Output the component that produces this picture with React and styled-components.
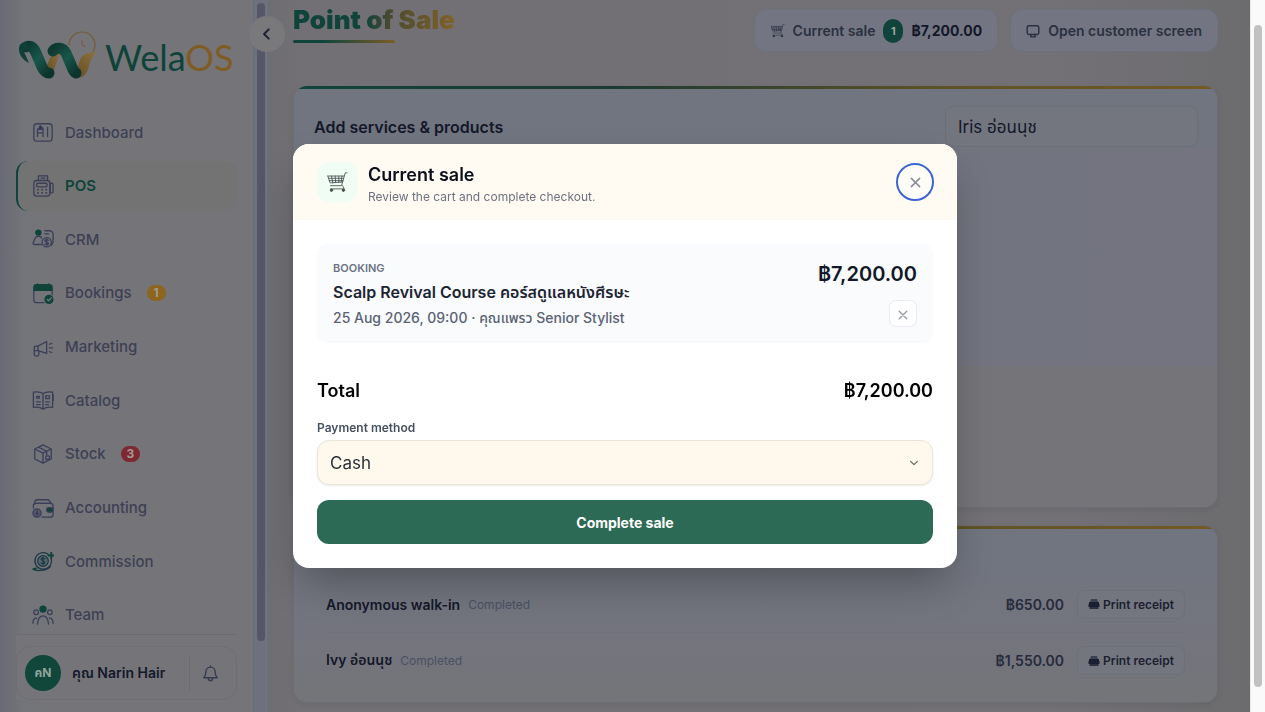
import React, { useState } from 'react';
import styled, { createGlobalStyle } from 'styled-components';

const GlobalStyle = createGlobalStyle`
    * {
        box-sizing: border-box;
    }

    body {
        margin: 0;
        overflow: hidden;
        font-family: Inter, "Noto Sans Thai", "Noto Sans", sans-serif;
        color: #14182a;
        background: #706f72;
    }

    button, select {
        font-family: inherit;
        margin: 0;
    }

    h1, h2, p {
        margin: 0;
    }
`;

const Page = styled.div`
    display: flex;
    height: 100vh;
    overflow: hidden;
`;

/* ---------- sidebar ---------- */

const Sidebar = styled.aside`
    position: relative;
    display: flex;
    flex-direction: column;
    flex: none;
    width: 254px;
    padding: 30px 16px 12px;
    border-right: 1px solid #686b78;
    background: linear-gradient(90deg, #696a74 0, #737479 22px, #757579 60px);
`;

const Brand = styled.a`
    display: flex;
    align-items: center;
    gap: 9px;
    height: 52px;
    margin-bottom: 25px;
    padding-left: 2px;
    text-decoration: none;
    font-family: Lato, sans-serif;
    font-size: 36px;
    line-height: 60px;
    color: #0f4339;

    span {
        padding-top: 1px;
    }
`;

const BrandAccent = styled.span`
    color: #805c25;
`;

const Nav = styled.nav`
    display: flex;
    flex: 1;
    flex-direction: column;
    justify-content: space-between;
    margin-bottom: -6px;
`;

const NavItem = styled.a`
    display: flex;
    align-items: center;
    flex: none;
    gap: 11px;
    height: 50px;
    padding-left: ${(p) => (p.$active ? '14px' : '16px')};
    border-left: ${(p) => (p.$active ? '2px solid #10443a' : '0')};
    border-radius: 12px;
    background: ${(p) => (p.$active ? '#737373' : 'transparent')};
    color: ${(p) => (p.$active ? '#10443a' : '#3d4055')};
    font-size: 15px;
    font-weight: ${(p) => (p.$active ? 600 : 500)};
    text-decoration: none;

    svg {
        flex: none;
        color: #3a3e59;
    }
`;

const Count = styled.span`
    min-width: 19px;
    height: 16px;
    margin-left: 4px;
    border-radius: 8px;
    background: ${(p) => p.$color};
    color: #a09c98;
    font-size: 12px;
    font-weight: 700;
    line-height: 16px;
    text-align: center;
`;

const SidebarFooter = styled.div`
    position: relative;
    padding-top: 11px;
    border-top: 1px solid #6b6b71;
    background: #757579;
`;

const Profile = styled.div`
    display: flex;
    align-items: center;
    height: 54px;
    padding: 0 0 0 8px;
    border: 1px solid #6f6f73;
    border-radius: 14px;
`;

const Avatar = styled.span`
    flex: none;
    width: 36px;
    height: 36px;
    border-radius: 50%;
    background: #10473a;
    color: #92a39e;
    font-size: 12px;
    font-weight: 700;
    line-height: 36px;
    text-align: center;
`;

const ProfileName = styled.span`
    flex: 1;
    margin-left: 11px;
    font-size: 14px;
    font-weight: 600;
    white-space: nowrap;
`;

const BellButton = styled.button`
    display: flex;
    align-items: center;
    justify-content: center;
    width: 47px;
    height: 36px;
    padding: 0 6px 0 0;
    border: 0;
    border-left: 1px solid #6c6c71;
    background: none;
    color: #363a50;
`;

const SideScroll = styled.div`
    position: relative;
    flex: none;
    width: 13px;
    padding: 3px 1px 0 3px;
    background: #6d707d;
    border-right: 1px solid #747580;
`;

const SideThumb = styled.div`
    height: 638px;
    border-radius: 4px;
    background: #535767;
`;

const CollapseButton = styled.button`
    position: absolute;
    top: 16px;
    left: -5px;
    display: flex;
    align-items: center;
    justify-content: center;
    width: 36px;
    height: 36px;
    padding: 0;
    border: 0;
    border-radius: 50%;
    background: #79797c;
    color: #1d2233;
`;

/* ---------- main ---------- */

const Main = styled.main`
    flex: 1;
    min-width: 0;
    padding: 5px 32px 0 26px;
    background: linear-gradient(90deg, #6e6d73 0, #727074 30px, #737175 80%, #6c6b6e 100%);
`;

const Header = styled.header`
    display: flex;
    align-items: flex-start;
    justify-content: space-between;
    height: 81px;
`;

const PageTitle = styled.h1`
    font-size: 26px;
    font-weight: 900;
    line-height: 30px;
    background: linear-gradient(90deg, #10443a 45%, #4a4a30 60%, #826127 100%);
    background-clip: text;
    color: transparent;
`;

const TitleRule = styled.div`
    width: 102px;
    height: 3px;
    margin-top: 5px;
    border-radius: 2px;
    background: linear-gradient(90deg, #10443a 30%, #7b5d28 100%);
`;

const HeaderActions = styled.div`
    display: flex;
    gap: 12px;
    padding-top: 4px;
`;

const HeaderButton = styled.button`
    display: flex;
    align-items: center;
    gap: 8px;
    height: 43px;
    padding: 0 15px;
    border: 1px solid #6c7180;
    border-radius: 12px;
    background: #737682;
    color: #2b3040;
    font-size: 14px;
    font-weight: 600;
    white-space: nowrap;

    b {
        font-weight: 700;
        color: #131729;
    }
`;

const CartCount = styled.span`
    width: 20px;
    height: 24px;
    border-radius: 10px;
    background: #10443a;
    color: #9aa6a4;
    font-size: 11px;
    font-weight: 700;
    line-height: 24px;
`;

const Card = styled.section`
    position: relative;
    margin-bottom: 18px;
    overflow: hidden;
    border: 1px solid #6d6e75;
    border-top: 0;
    border-radius: 14px;
    background: linear-gradient(180deg, #70757f, #73747e 60%, #747578);
    box-shadow: 0 2px 6px rgba(0, 0, 0, 0.08);

    &::before {
        content: '';
        display: block;
        height: 3px;
        background: linear-gradient(90deg, #10443a, #1d3a32 35%, #5d5226 70%, #745923);
    }
`;

const CatalogHead = styled.div`
    display: flex;
    align-items: center;
    justify-content: space-between;
    padding: 17px 19px 0 20px;
`;

const CardTitle = styled.h2`
    font-size: 16px;
    font-weight: 600;
`;

const BranchSelect = styled.select`
    width: 253px;
    height: 41px;
    padding: 0 12px;
    appearance: none;
    border: 1px solid #6c6f77;
    border-radius: 8px;
    background: #73767f;
    color: #14182a;
    font-size: 17px;
`;

const CatalogPanel = styled.div`
    height: 219px;
    background: linear-gradient(90deg, #71747f, #73747f);
`;

const CatalogRest = styled.div`
    height: 141px;
    background: #757579;
`;

const SalesCard = styled(Card)`
    padding-bottom: 14px;
    margin-bottom: 0;
`;

const Sales = styled.ul`
    margin: 47px 32px 0;
    padding: 0;
    list-style: none;
`;

const Sale = styled.li`
    display: flex;
    align-items: center;
    height: 56px;
    font-size: 14px;

    & + & {
        border-top: 1px solid #707279;
    }
`;

const Customer = styled.span`
    font-weight: 600;
`;

const SaleStatus = styled.span`
    flex: 1;
    margin-left: 8px;
    color: #4a5063;
    font-size: 12px;
`;

const SaleAmount = styled.span`
    margin-right: 13px;
    color: #262b3d;
    font-size: 14px;
    font-weight: 600;
`;

const PrintButton = styled.button`
    display: flex;
    align-items: center;
    gap: 3px;
    height: 29px;
    padding: 0 10px;
    border: 1px solid #6c7079;
    border-radius: 7px;
    background: #74767f;
    color: #1a1f31;
    font-size: 12px;
    font-weight: 600;
`;

const PageScroll = styled.div`
    flex: none;
    width: 15px;
    padding: 25px 3px 0;
    border-left: 1px solid #e8e8e8;
    background: #fafafa;
`;

const PageThumb = styled.div`
    height: 662px;
    border-radius: 4px;
    background: #c1c1c1;
`;

/* ---------- checkout dialog ---------- */

const Overlay = styled.div`
    position: fixed;
    inset: 0 15px 0 0;
    display: flex;
    align-items: center;
    justify-content: center;
`;

const Dialog = styled.div`
    width: 664px;
    overflow: hidden;
    border-radius: 16px;
    background: #fff;
    color: #0b0f19;
    box-shadow: 0 20px 44px -10px rgba(0, 0, 0, 0.32);
`;

const DialogHead = styled.div`
    display: flex;
    align-items: center;
    height: 76px;
    padding: 0 23px 0 24px;
    border-bottom: 1px solid #fdf9f0;
    background: #fffbf2;
`;

const CartTile = styled.span`
    display: flex;
    align-items: center;
    justify-content: center;
    width: 40px;
    height: 40px;
    margin-right: 11px;
    border-radius: 12px;
    background: #effdf5;
    color: #444b4b;
`;

const DialogHeading = styled.div`
    flex: 1;
    padding-top: 6px;
`;

const DialogTitle = styled.h2`
    font-size: 18px;
    font-weight: 600;
    line-height: 24px;
`;

const DialogHint = styled.p`
    color: #6d7280;
    font-size: 12px;
    line-height: 20px;
`;

const CloseButton = styled.button`
    display: flex;
    align-items: center;
    justify-content: center;
    width: 38px;
    height: 38px;
    padding: 2px 0 0;
    border: 2px solid #3d64d4;
    border-radius: 50%;
    background: #fffdf8;
    color: #868b96;
`;

const DialogBody = styled.form`
    display: flex;
    flex-direction: column;
    padding: 24px;
`;

const CartLine = styled.div`
    display: flex;
    justify-content: space-between;
    height: 99px;
    padding: 16px;
    border-radius: 10px;
    background: #f9fbfd;
`;

const LineKind = styled.p`
    color: #6d7382;
    font-size: 11px;
    font-weight: 600;
    line-height: 16px;
`;

const LineTitle = styled.p`
    margin-top: 4px;
    color: #1d2433;
    font-size: 16px;
    font-weight: 600;
    line-height: 25px;
`;

const LineMeta = styled.p`
    color: #5a6274;
    font-size: 14px;
    font-weight: 500;
    line-height: 25px;
`;

const LineSide = styled.div`
    display: flex;
    flex-direction: column;
    align-items: flex-end;
    gap: 11px;
`;

const LinePrice = styled.span`
    color: #111827;
    font-size: 20px;
    font-weight: 600;
    line-height: 29px;
`;

const RemoveButton = styled.button`
    display: flex;
    align-items: center;
    justify-content: center;
    width: 28px;
    height: 28px;
    padding: 2px 0 0;
    border: 1px solid #e9ebf0;
    border-radius: 7px;
    background: #fff;
    color: #9599a3;
`;

const TotalRow = styled.div`
    display: flex;
    justify-content: space-between;
    margin-top: 35px;
    color: #000;
    font-size: 18px;
    font-weight: 600;
    line-height: 26px;
`;

const FieldLabel = styled.label`
    margin-top: 15px;
    color: #465063;
    font-size: 12px;
    font-weight: 600;
    line-height: 18px;
`;

const SelectWrap = styled.div`
    display: grid;
    align-items: center;
    margin-top: 3px;

    select, svg {
        grid-area: 1 / 1;
    }

    svg {
        justify-self: end;
        margin-right: 14px;
        color: #666;
        pointer-events: none;
    }
`;

const PaymentSelect = styled.select`
    width: 100%;
    height: 45px;
    padding: 0 12px;
    appearance: none;
    border: 1px solid #e9e5da;
    border-radius: 12px;
    background: #fef9ec;
    color: #2b2f38;
    font-size: 17px;
    box-shadow: 0 1px 2px rgba(0, 0, 0, 0.08);
`;

const CompleteButton = styled.button`
    height: 44px;
    margin-top: 15px;
    border: 0;
    border-radius: 12px;
    background: #2c6a55;
    color: #fff;
    font-size: 14px;
    font-weight: 700;
`;

/* ---------- drawings ---------- */

const GREEN = '#10443a';

const LogoMark = () => (
    <svg width="78" height="52" viewBox="0 0 78 52" fill="none" aria-hidden="true">
        <defs>
            <linearGradient id="ribbonGreen" x1="0" y1="0" x2="1" y2="1">
                <stop offset="0" stopColor="#0d3830" />
                <stop offset="0.5" stopColor="#19564a" />
                <stop offset="1" stopColor="#0c332c" />
            </linearGradient>
            <linearGradient id="ribbonGold" x1="0" y1="1" x2="1" y2="0">
                <stop offset="0" stopColor="#5f4a25" />
                <stop offset="1" stopColor="#8c713c" />
            </linearGradient>
        </defs>
        <path d="M51 15a13 13 0 0 1 26 0c0 3-1 5-2 7" stroke="#745a30" strokeWidth="1.2" />
        <path d="M64 10v5l4 2" stroke="#745a30" strokeWidth="1" />
        <path d="M28 48c5-1 7-5 9-11l5-14-7-1-7 15z" fill="url(#ribbonGold)" />
        <path d="M8 17c5-2 8 1 10 6l6 14c2 4 4 6 7 6" stroke="url(#ribbonGreen)" strokeWidth="11" strokeLinecap="round" />
        <path d="M1 19c0-5 3-7 8-7l3 9c-4-3-8-2-5 3l4 9C5 30 1 25 1 19z" fill="#0f3f36" />
        <path d="M53 46c9 5 16 0 18-10 1-6 4-10 7-14-9 1-14 2-16 8l-4 12z" fill="url(#ribbonGold)" />
        <path d="M35 21c3-4 10-4 13 2l6 14c1 3 2 5 4 6" stroke="url(#ribbonGreen)" strokeWidth="11" strokeLinecap="round" />
    </svg>
);

const Icon = ({ size = 22, children, ...rest }) => (
    <svg
        width={size}
        height={size}
        viewBox="0 0 24 24"
        fill="none"
        stroke="currentColor"
        strokeWidth="1.4"
        strokeLinecap="round"
        strokeLinejoin="round"
        aria-hidden="true"
        {...rest}
    >
        {children}
    </svg>
);

const icons = {
    dashboard: (
        <Icon>
            <rect x="2" y="3" width="20" height="19" rx="3.5" />
            <path d="M6 17V9h6v8M6 13h6M17 7v10" />
            <path d="M7 9l2-4 3 3z" fill="#2a3049" />
        </Icon>
    ),
    pos: (
        <Icon>
            <path d="M7 6V1h10v5M10 3.500h4" />
            <rect x="2" y="6" width="17.500" height="17" rx="3" />
            <rect x="5" y="9" width="11.500" height="4" rx="1.500" />
            <path d="M6.500 16h.1M11 16h.1M15.500 16h.1M6.500 19.500h.1M11 19.500h.1M15.500 19.500h.1" strokeWidth="2" />
            <path d="M20 9h1.500A1.500 1.500 0 0 1 23 10.500V18a1.500 1.500 0 0 1-1.500 1.500H20z" />
        </Icon>
    ),
    crm: (
        <Icon>
            <circle cx="7" cy="5" r="2.800" fill={GREEN} stroke={GREEN} />
            <path d="M10 18H2.500c-1.500 0-1.500-1-1-2.500L3.500 11c1-2 2-2 3.500-2s3 0 3.500 2M14 3h5a4 4 0 0 1 4 4v4M14 6.500h4" />
            <circle cx="16" cy="15.500" r="5" />
            <path d="M18 13.500c-1-1-4-1-4 .5s4 1.500 4 3-3 1.500-4 .5M16 12v7" />
            <path d="M23 11v4l-2 4" />
        </Icon>
    ),
    bookings: (
        <Icon>
            <path d="M2 9V20a2.500 2.500 0 0 0 2.500 2.500H13M22 9v5" />
            <path d="M2 9V6a3 3 0 0 1 3-3h14a3 3 0 0 1 3 3v3zM6 2v2M18 2v2" fill={GREEN} stroke={GREEN} />
            <circle cx="18.500" cy="19" r="5" fill={GREEN} stroke="none" />
            <path d="M16.500 19l1.500 1.500 3-3" stroke="#757579" />
        </Icon>
    ),
    marketing: (
        <Icon>
            <path d="M6.500 11L16 6v13l-9.500-3zM6.500 11H4a1.500 1.500 0 0 0-1.500 1.500V20a2 2 0 0 0 2 2h1a2 2 0 0 0 2-2v-4M3 16h3.500" />
            <path d="M19 9l2.500-1M19 13h3.500M19 17l2.500 1" />
        </Icon>
    ),
    catalog: (
        <Icon>
            <path d="M12 5C9 3 5 3 1.500 3.500V20C5 19.500 9 19.500 12 22c3-2.500 7-2.500 10.500-2V3.500C19 3 15 3 12 5zM12 5v17" />
            <path d="M5 8h3v2H5zM15 7.500h4v3h-4zM5 14h4M5 17h4M15 14h4M15 17h3" />
            <path d="M22.500 7H24v5h-1.500" />
        </Icon>
    ),
    stock: (
        <Icon>
            <path d="M12 2l9 4.500v11L12 22l-9-4.500v-11zM3 6.500l9 4.500 9-4.500M12 11v11M7 4.500l9 4.500v4" />
            <rect x="15" y="14" width="4" height="4" rx="1" />
        </Icon>
    ),
    accounting: (
        <Icon>
            <path d="M3 8V6a3 3 0 0 1 3-3h12l3 4H5" />
            <path d="M1.500 12V9a2 2 0 0 1 2-2H20a3 3 0 0 1 3 3v9a3 3 0 0 1-3 3h-9" />
            <rect x="16" y="11.500" width="7" height="5" rx="2" fill={GREEN} />
            <circle cx="5.500" cy="17.500" r="4.500" fill="#55586a" />
            <path d="M5.500 15v5M4 18h3" />
        </Icon>
    ),
    commission: (
        <Icon stroke="#1f3a46">
            <path d="M18 5a9 9 0 1 0 3 5M3 22c6 1 14 0 17-4" />
            <circle cx="12" cy="12" r="5.800" fill="#55686c" />
            <path d="M14 9.500c-2-1-4-1-4 .5s4 2 4 3.500-2.500 2-4 .5M12 8v8" />
            <path d="M21 3v6M18 6h6M1.500 21l3-1" stroke={GREEN} strokeWidth="2.200" />
        </Icon>
    ),
    team: (
        <Icon>
            <circle cx="12" cy="5.500" r="3.300" fill={GREEN} stroke={GREEN} />
            <circle cx="4.500" cy="9" r="2.500" />
            <circle cx="19.500" cy="9" r="2.500" />
            <path d="M6 22c.5-6 2.500-9 6-9s5.500 3 6 9M1 21c0-3 1-5.500 4-5.500M23 21c0-3-1-5.500-4-5.500" />
        </Icon>
    ),
};

const CartIcon = ({ size }) => (
    <Icon size={size} strokeWidth="0.9">
        <path d="M23 2h-2l-4 14H5M2 5.500h17.500M2 5.500L4.500 13l13.500-1M3 8h16M3.500 10.500h15M6 5.500l1.500 7.500M10 5.500l.5 7M14 5.500v7M17.500 5.500L16.500 12M5 19.500h15l-2-3.500" />
        <circle cx="6" cy="21" r="1.300" fill="currentColor" />
        <circle cx="19" cy="21" r="1.300" fill="currentColor" />
    </Icon>
);

const MonitorIcon = () => (
    <Icon size={14} strokeWidth="2.400">
        <rect x="2" y="3" width="20" height="15" rx="3" />
        <path d="M9 18l-1 4h8l-1-4" />
    </Icon>
);

const PrinterIcon = () => (
    <Icon size={12} stroke="none" fill="currentColor">
        <path d="M6 2h12l2 6H4z" opacity="0.6" />
        <path d="M2 8h20v4H2zM1 12h22v6H1z" />
        <path d="M3 18h18v4H3z" opacity="0.8" />
    </Icon>
);

const CrossIcon = ({ size }) => (
    <Icon size={size} strokeWidth="3.200">
        <path d="M3 3l18 18M21 3L3 21" />
    </Icon>
);

const BellIcon = () => (
    <Icon size={17} strokeWidth="2">
        <path d="M12 3a6.500 6.500 0 0 0-6.500 6.500c0 5-1.500 6.500-3 8.500h19c-1.500-2-3-3.500-3-8.500A6.500 6.500 0 0 0 12 3zM12 1.500V3M9 19a3 3 0 0 0 6 0" />
    </Icon>
);

const ChevronIcon = ({ size, points, width }) => (
    <Icon size={size} strokeWidth={width}>
        <path d={points} />
    </Icon>
);

/* ---------- data ---------- */

const navItems = [
    { icon: 'dashboard', label: 'Dashboard' },
    { icon: 'pos', label: 'POS', active: true },
    { icon: 'crm', label: 'CRM' },
    { icon: 'bookings', label: 'Bookings', count: 1, color: '#8d651f' },
    { icon: 'marketing', label: 'Marketing' },
    { icon: 'catalog', label: 'Catalog' },
    { icon: 'stock', label: 'Stock', count: 3, color: '#7e2831' },
    { icon: 'accounting', label: 'Accounting' },
    { icon: 'commission', label: 'Commission' },
    { icon: 'team', label: 'Team' },
];

const sales = [
    { customer: 'Anonymous walk-in', status: 'Completed', amount: '฿650.00' },
    { customer: 'Ivy อ่อนนุช', status: 'Completed', amount: '฿1,550.00' },
];

function App() {
    const [method, setMethod] = useState('Cash');

    return (
        <>
            <GlobalStyle />
            <Page>
                <Sidebar>
                    <Brand href="#home">
                        <LogoMark />
                        <span>Wela<BrandAccent>OS</BrandAccent></span>
                    </Brand>
                    <Nav>
                        {navItems.map((item) => (
                            <NavItem key={item.label} href={'#' + item.icon} $active={item.active}>
                                {icons[item.icon]}
                                {item.label}
                                {item.count && <Count $color={item.color}>{item.count}</Count>}
                            </NavItem>
                        ))}
                    </Nav>
                    <SidebarFooter>
                        <Profile>
                            <Avatar>คN</Avatar>
                            <ProfileName>คุณ Narin Hair</ProfileName>
                            <BellButton type="button" aria-label="Notifications"><BellIcon /></BellButton>
                        </Profile>
                    </SidebarFooter>
                </Sidebar>
                <SideScroll>
                    <SideThumb />
                    <CollapseButton type="button" aria-label="Collapse menu">
                        <ChevronIcon size={14} width="3.4" points="M15 4l-8 8 8 8" />
                    </CollapseButton>
                </SideScroll>

                <Main>
                    <Header>
                        <div>
                            <PageTitle>Point of Sale</PageTitle>
                            <TitleRule />
                        </div>
                        <HeaderActions>
                            <HeaderButton type="button">
                                <CartIcon size={15} />
                                Current sale
                                <CartCount>1</CartCount>
                                <b>฿7,200.00</b>
                            </HeaderButton>
                            <HeaderButton type="button">
                                <MonitorIcon />
                                Open customer screen
                            </HeaderButton>
                        </HeaderActions>
                    </Header>

                    <Card>
                        <CatalogHead>
                            <CardTitle>Add services &amp; products</CardTitle>
                            <BranchSelect aria-label="Branch" defaultValue="iris">
                                <option value="iris">Iris อ่อนนุช</option>
                            </BranchSelect>
                        </CatalogHead>
                        <CatalogPanel />
                        <CatalogRest />
                    </Card>

                    <SalesCard>
                        <Sales>
                            {sales.map((sale) => (
                                <Sale key={sale.customer}>
                                    <Customer>{sale.customer}</Customer>
                                    <SaleStatus>{sale.status}</SaleStatus>
                                    <SaleAmount>{sale.amount}</SaleAmount>
                                    <PrintButton type="button"><PrinterIcon />Print receipt</PrintButton>
                                </Sale>
                            ))}
                        </Sales>
                    </SalesCard>
                </Main>

                <PageScroll><PageThumb /></PageScroll>
            </Page>

            <Overlay>
                <Dialog role="dialog" aria-modal="true" aria-labelledby="checkout-title">
                    <DialogHead>
                        <CartTile><CartIcon size={22} /></CartTile>
                        <DialogHeading>
                            <DialogTitle id="checkout-title">Current sale</DialogTitle>
                            <DialogHint>Review the cart and complete checkout.</DialogHint>
                        </DialogHeading>
                        <CloseButton type="button" aria-label="Close"><CrossIcon size={11} /></CloseButton>
                    </DialogHead>
                    <DialogBody onSubmit={(e) => e.preventDefault()}>
                        <CartLine>
                            <div>
                                <LineKind>BOOKING</LineKind>
                                <LineTitle>Scalp Revival Course คอร์สดูแลหนังศีรษะ</LineTitle>
                                <LineMeta>25 Aug 2026, 09:00 · คุณแพรว Senior Stylist</LineMeta>
                            </div>
                            <LineSide>
                                <LinePrice>฿7,200.00</LinePrice>
                                <RemoveButton type="button" aria-label="Remove"><CrossIcon size={10} /></RemoveButton>
                            </LineSide>
                        </CartLine>
                        <TotalRow>
                            <span>Total</span>
                            <span>฿7,200.00</span>
                        </TotalRow>
                        <FieldLabel htmlFor="method">Payment method</FieldLabel>
                        <SelectWrap>
                            <PaymentSelect id="method" value={method} onChange={(e) => setMethod(e.target.value)}>
                                <option>Cash</option>
                                <option>Card</option>
                                <option>PromptPay</option>
                            </PaymentSelect>
                            <ChevronIcon size={10} width="3" points="M4 8l8 8 8-8" />
                        </SelectWrap>
                        <CompleteButton type="submit">Complete sale</CompleteButton>
                    </DialogBody>
                </Dialog>
            </Overlay>
        </>
    );
}

export default App;
